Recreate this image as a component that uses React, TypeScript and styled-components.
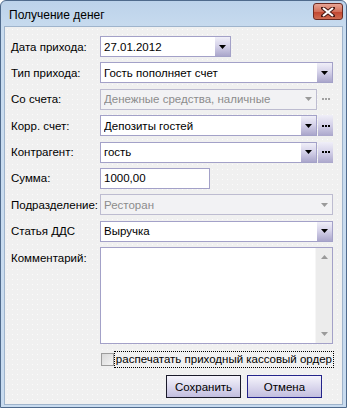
import {FC} from "react";
import styled, {createGlobalStyle, css} from "styled-components";

const GlobalStyle = createGlobalStyle`
  html, body {
    margin: 0;
    padding: 0;
    background: #ffffff;
  }
  * {
    box-sizing: border-box;
  }
`

const Window = styled.div`
  width: 347px;
  height: 408px;
  display: flex;
  flex-direction: column;
  border: 1px solid #4f6a8c;
  border-radius: 6px 6px 0 0;
  background: linear-gradient(#bcd2ea, #c9dcef 30px, #c8dbef);
  padding: 0 3px 2px 3px;
  font-family: "Liberation Sans", Arial, sans-serif;
  font-size: 11.5px;
  color: #000;
`

const TitleBar = styled.div`
  height: 25px;
  display: flex;
  align-items: center;
  justify-content: space-between;
  padding-left: 5px;
`

const Title = styled.span`
  font-size: 12px;
  margin-top: 2px;
`

const CloseButton = styled.div`
  width: 30px;
  height: 17px;
  margin-top: -4px;
  border: 1px solid #6b2a22;
  border-radius: 3px;
  background: linear-gradient(#e8a595, #d3705b 50%, #c2442e 51%, #cf6c52);
  display: flex;
  align-items: center;
  justify-content: center;
`

const Client = styled.div`
  flex: 1;
  background-color: #f0f0f0;
  background-image: radial-gradient(#fbfbfb 0.6px, transparent 0.8px);
  background-size: 5px 5px;
  border: 1px solid #9fb4cc;
  padding: 9px 9px 0 6px;
  display: flex;
  flex-direction: column;
`

const Form = styled.div`
  display: grid;
  grid-template-columns: 89px 1fr;
  grid-template-rows: repeat(8, 21px) 97px;
  row-gap: 5.4px;
`

const Label = styled.div<{ $top?: boolean }>`
  display: flex;
  align-items: ${p => p.$top ? "flex-start" : "center"};
  padding-top: ${p => p.$top ? "5px" : "0"};
  white-space: nowrap;
`

const Field = styled.div<{ $width?: number }>`
  display: flex;
  width: ${p => p.$width ? `${p.$width}px` : "100%"};
  height: 21px;
`

const Box = styled.div<{ $disabled?: boolean }>`
  flex: 1;
  display: flex;
  align-items: center;
  border: 1px solid ${p => p.$disabled ? "#bdbcd0" : "#a3a1c8"};
  background: ${p => p.$disabled ? "#f2f2f4" : "#ffffff"};
  color: ${p => p.$disabled ? "#8c8c8c" : "#000"};
  padding-left: 3px;
  min-width: 0;
`

const BoxText = styled.span`
  flex: 1;
  white-space: nowrap;
  overflow: hidden;
`

const buttonFace = css`
  background: linear-gradient(#f0eff8, #d6d3ea 45%, #aaa6cb);
`

const DropButton = styled.div<{ $disabled?: boolean }>`
  width: 15px;
  align-self: stretch;
  display: flex;
  align-items: center;
  justify-content: center;
  ${p => p.$disabled ? "" : buttonFace}
`

const DotsButton = styled.div<{ $disabled?: boolean }>`
  width: 15px;
  margin-left: 1px;
  display: flex;
  align-items: center;
  justify-content: center;
  gap: 1px;
  ${p => p.$disabled ? "" : buttonFace}
`

const Dot = styled.span<{ $disabled?: boolean }>`
  width: 2px;
  height: 2px;
  background: ${p => p.$disabled ? "#a0a0a0" : "#000"};
`

const Memo = styled.div`
  display: flex;
  border: 1px solid #a3a1c8;
  background: #ffffff;
`

const MemoArea = styled.div`
  flex: 1;
`

const ScrollBar = styled.div`
  width: 17px;
  background: #ececec;
  border-left: 1px solid #f6f6f6;
  display: flex;
  flex-direction: column;
  justify-content: space-between;
  align-items: center;
  padding: 7px 0;
`

const PrintRow = styled.div`
  display: flex;
  align-items: center;
  margin-top: 8px;
  margin-left: 89px;
  height: 15px;
`

const CheckBox = styled.div`
  width: 13px;
  height: 13px;
  border: 1px solid #9c9c9c;
  background: linear-gradient(135deg, #d8d8d8, #f4f4f4);
  margin-left: 1px;
`

const CheckLabel = styled.span`
  margin-left: 1px;
  padding: 0 1px;
  outline: 1px dotted #000;
  line-height: 15px;
  white-space: nowrap;
`

const Buttons = styled.div`
  display: flex;
  justify-content: flex-end;
  gap: 6px;
  margin-top: 8px;
  padding-right: 11px;
`

const Button = styled.div<{ $default?: boolean }>`
  width: 75px;
  height: 23px;
  display: flex;
  align-items: center;
  justify-content: center;
  border: 1px solid ${p => p.$default ? "#1a1a2a" : "#24248a"};
  background: linear-gradient(#f5f4fb, #dcd9ee 50%, #c2bedf);
`

const Arrow: FC<{ disabled?: boolean; up?: boolean }> = ({disabled, up}) => (
    <svg width="7" height="4" viewBox="0 0 7 4">
        <path d={up ? "M0 4 L7 4 L3.5 0 Z" : "M0 0 L7 0 L3.5 4 Z"} fill={disabled ? "#9a9a9a" : "#000"}/>
    </svg>
)

const Combo: FC<{ value: string; disabled?: boolean; dots?: boolean; width?: number }> = ({value, disabled, dots, width}) => (
    <Field $width={width}>
        <Box $disabled={disabled}>
            <BoxText>{value}</BoxText>
            <DropButton $disabled={disabled}><Arrow disabled={disabled}/></DropButton>
        </Box>
        {dots && (
            <DotsButton $disabled={disabled}>
                <Dot $disabled={disabled}/><Dot $disabled={disabled}/><Dot $disabled={disabled}/>
            </DotsButton>
        )}
    </Field>
)

const App: FC = () => {
    return (
        <>
            <GlobalStyle/>
            <Window>
                <TitleBar>
                    <Title>Получение денег</Title>
                    <CloseButton>
                        <svg width="14" height="10" viewBox="0 0 14 10">
                            <path d="M2 1 L12 9 M12 1 L2 9" stroke="#4a1a14" strokeWidth="4" strokeLinecap="square"/>
                            <path d="M2 1 L12 9 M12 1 L2 9" stroke="#ffffff" strokeWidth="2.2"/>
                        </svg>
                    </CloseButton>
                </TitleBar>
                <Client>
                    <Form>
                        <Label>Дата прихода:</Label>
                        <Combo value="27.01.2012" width={131}/>

                        <Label>Тип прихода:</Label>
                        <Combo value="Гость пополняет счет"/>

                        <Label>Со счета:</Label>
                        <Combo value="Денежные средства, наличные" disabled dots/>

                        <Label>Корр. счет:</Label>
                        <Combo value="Депозиты гостей" dots/>

                        <Label>Контрагент:</Label>
                        <Combo value="гость" dots/>

                        <Label>Сумма:</Label>
                        <Field $width={110}>
                            <Box><BoxText>1000,00</BoxText></Box>
                        </Field>

                        <Label>Подразделение:</Label>
                        <Combo value="Ресторан" disabled/>

                        <Label>Статья ДДС</Label>
                        <Combo value="Выручка"/>

                        <Label $top>Комментарий:</Label>
                        <Memo>
                            <MemoArea/>
                            <ScrollBar>
                                <Arrow up disabled/>
                                <Arrow disabled/>
                            </ScrollBar>
                        </Memo>
                    </Form>
                    <PrintRow>
                        <CheckBox/>
                        <CheckLabel>распечатать приходный кассовый ордер</CheckLabel>
                    </PrintRow>
                    <Buttons>
                        <Button $default>Сохранить</Button>
                        <Button>Отмена</Button>
                    </Buttons>
                </Client>
            </Window>
        </>
    )
}

export default App
